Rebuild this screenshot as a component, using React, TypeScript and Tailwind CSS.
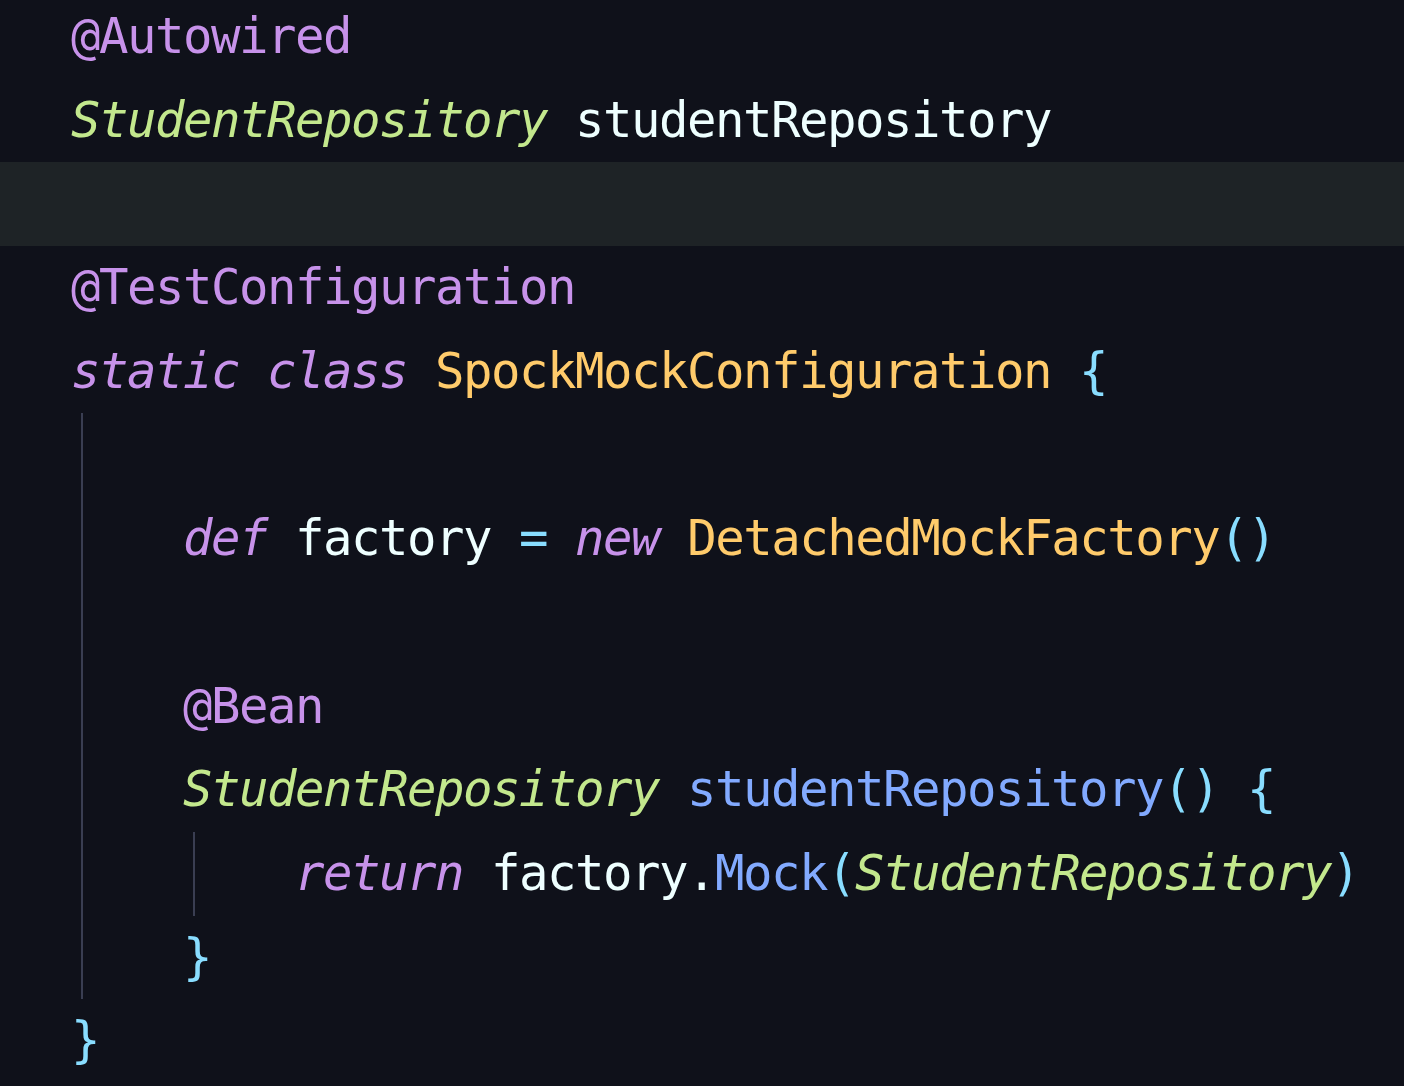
import React from "react";

// Material Ocean-ish palette
const kw = "text-[#c792ea] italic";
const ann = "text-[#c792ea]";
const type = "text-[#c3e88d] italic";
const cls = "text-[#ffcb6b]";
const punct = "text-[#89ddff]";
const fn = "text-[#82aaff]";
const plain = "text-[#eeffff]";

function Line({ children, active }: { children?: React.ReactNode; active?: boolean }) {
  return (
    <div className={"h-[83.7px] leading-[83.7px] whitespace-pre " + (active ? "bg-[#1e2326]" : "")}>
      {children ?? " "}
    </div>
  );
}

export default function App() {
  return (
    <div className="min-h-screen w-full overflow-hidden bg-[#0f111a]">
      <div
        className="-mt-[5px] text-[49px] tracking-[-1.5px] text-[#eeffff]"
        style={{ fontFamily: '"DejaVu Sans Mono", "Liberation Mono", monospace' }}
      >
        <div className="pl-[71px]">
          <Line>
            <span className={ann}>@Autowired</span>
          </Line>
          <Line>
            <span className={type}>StudentRepository</span> <span className={plain}>studentRepository</span>
          </Line>
        </div>
        <Line active />
        <div className="pl-[71px]">
          <Line>
            <span className={ann}>@TestConfiguration</span>
          </Line>
          <Line>
            <span className={kw}>static</span> <span className={kw}>class</span>{" "}
            <span className={cls}>SpockMockConfiguration</span> <span className={punct}>{"{"}</span>
          </Line>

          {/* class body with indent guide */}
          <div className="ml-[10px] border-l-2 border-[#3a3e52] pl-[100px]">
            <Line />
            <Line>
              <span className={kw}>def</span> <span className={plain}>factory</span>{" "}
              <span className={punct}>=</span> <span className={kw}>new</span>{" "}
              <span className={cls}>DetachedMockFactory</span>
              <span className={punct}>()</span>
            </Line>
            <Line />
            <Line>
              <span className={ann}>@Bean</span>
            </Line>
            <Line>
              <span className={type}>StudentRepository</span> <span className={fn}>studentRepository</span>
              <span className={punct}>()</span> <span className={punct}>{"{"}</span>
            </Line>
            <div className="ml-[10px] border-l-2 border-[#3a3e52] pl-[100px]">
              <Line>
                <span className={kw}>return</span> <span className={plain}>factory</span>
                <span className={plain}>.</span>
                <span className={fn}>Mock</span>
                <span className={punct}>(</span>
                <span className={type}>StudentRepository</span>
                <span className={punct}>)</span>
              </Line>
            </div>
            <Line>
              <span className={punct}>{"}"}</span>
            </Line>
          </div>
          <Line>
            <span className={punct}>{"}"}</span>
          </Line>
        </div>
      </div>
    </div>
  );
}
